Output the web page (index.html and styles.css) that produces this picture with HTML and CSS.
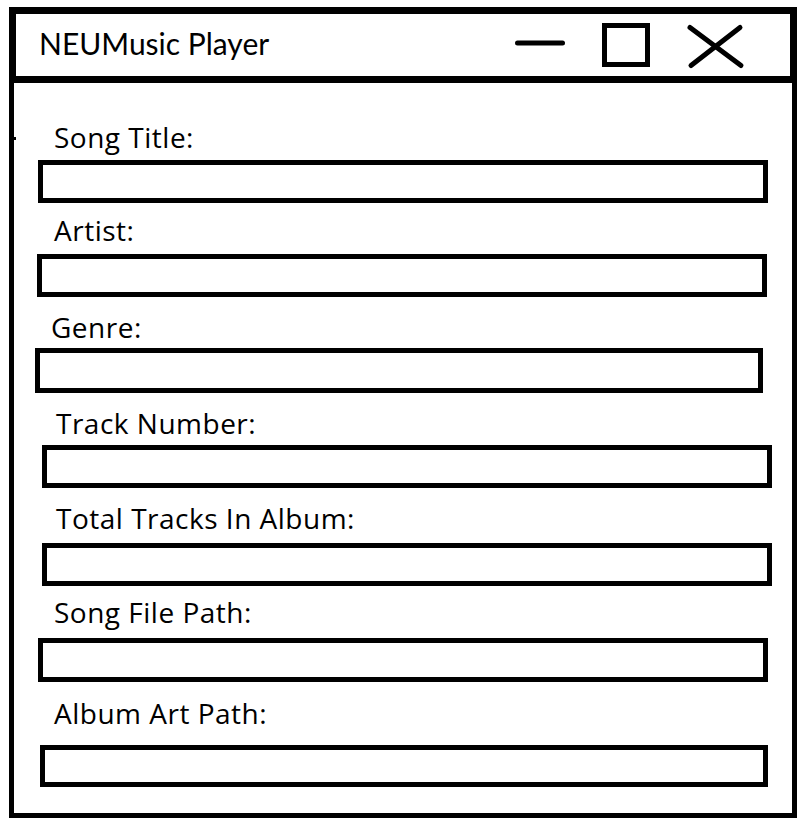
FILE: index.html
```html
<!DOCTYPE html>
<html lang="en">
<head>
<meta charset="utf-8">
<title>NEUMusic Player</title>
<link rel="stylesheet" href="styles.css">
</head>
<body>
<div class="window">
  <div class="titlebar">
    <h1 class="app-title">NEUMusic Player</h1>
    <svg class="controls" width="245" height="62" viewBox="0 0 245 62" aria-hidden="true">
      <line x1="10.5" y1="29" x2="55.5" y2="29" stroke="#000" stroke-width="5" stroke-linecap="round"/>
      <rect x="97.5" y="11.5" width="43" height="39" fill="none" stroke="#000" stroke-width="5"/>
      <line x1="183" y1="13.5" x2="234" y2="51.5" stroke="#000" stroke-width="5" stroke-linecap="round"/>
      <line x1="233" y1="13.5" x2="184" y2="51.5" stroke="#000" stroke-width="5" stroke-linecap="round"/>
    </svg>
  </div>
  <div class="panel">
    <div class="field field--title">
      <div class="label">Song Title:</div>
      <div class="box"></div>
    </div>
    <div class="field field--artist">
      <div class="label">Artist:</div>
      <div class="box"></div>
    </div>
    <div class="field field--genre">
      <div class="label">Genre:</div>
      <div class="box"></div>
    </div>
    <div class="field field--track">
      <div class="label">Track Number:</div>
      <div class="box"></div>
    </div>
    <div class="field field--total">
      <div class="label">Total Tracks In Album:</div>
      <div class="box"></div>
    </div>
    <div class="field field--file">
      <div class="label">Song File Path:</div>
      <div class="box"></div>
    </div>
    <div class="field field--art">
      <div class="label">Album Art Path:</div>
      <div class="box"></div>
    </div>
  </div>
</div>
</body>
</html>
```

FILE: styles.css
```css
html, body {
  margin: 0;
  padding: 0;
  background: #fff;
}

body {
  font-family: "Open Sans", Lato, sans-serif;
  color: #000;
}

.window {
  margin: 7px 0 0 9px;
  width: 788px;
  display: flex;
  flex-direction: column;
}

.titlebar {
  box-sizing: border-box;
  height: 76px;
  border: 7px solid #000;
  display: flex;
  align-items: flex-start;
}

.app-title {
  margin: 14px 0 0 23px;
  font-family: Lato, "Open Sans", sans-serif;
  font-size: 30px;
  line-height: 30px;
  font-weight: 400;
}

.controls {
  margin-left: auto;
  margin-right: 38px;
  display: block;
}

.panel {
  position: relative;
  box-sizing: border-box;
  border-left: 5px solid #000;
  border-right: 5px solid #000;
  border-bottom: 5px solid #000;
  padding-bottom: 26px;
  display: flex;
  flex-direction: column;
}

.panel::before {
  content: "";
  position: absolute;
  left: 0;
  top: 54px;
  width: 2px;
  height: 3px;
  background: #000;
}

.field {
  display: flex;
  flex-direction: column;
  align-items: flex-start;
}

.label {
  font-size: 28px;
  line-height: 28px;
  height: 28px;
  letter-spacing: 0.5px;
  white-space: nowrap;
}

.box {
  box-sizing: border-box;
  border: 5px solid #000;
  height: 43px;
  width: 730px;
}

.field--title { margin-top: 40px; }
.field--title .label { padding-left: 40px; }
.field--title .box { margin: 9px 0 0 24px; }

.field--artist { margin-top: 13px; }
.field--artist .label { padding-left: 40px; }
.field--artist .box { margin: 10px 0 0 23px; }

.field--genre { margin-top: 16px; }
.field--genre .label { padding-left: 37px; }
.field--genre .box { margin: 7px 0 0 21px; width: 728px; height: 45px; }

.field--track { margin-top: 16px; }
.field--track .label { padding-left: 42px; }
.field--track .box { margin: 8px 0 0 28px; }

.field--total { margin-top: 16px; }
.field--total .label { padding-left: 42px; }
.field--total .box { margin: 11px 0 0 28px; }

.field--file { margin-top: 12px; }
.field--file .label { padding-left: 40px; }
.field--file .box { margin: 12px 0 0 24px; height: 44px; }

.field--art { margin-top: 17px; }
.field--art .label { padding-left: 40px; }
.field--art .box { margin: 18px 0 0 26px; width: 728px; height: 42px; }
```
